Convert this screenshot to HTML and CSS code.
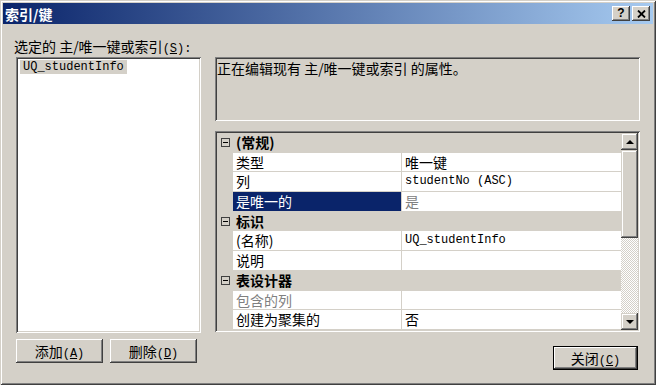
FILE: index.html
```html
<!DOCTYPE html>
<html lang="zh-CN">
<head>
<meta charset="UTF-8">
<link rel="stylesheet" href="styles.css">
</head>
<body>
<div class="window">
  <div class="titlebar">
    <span class="title">索引/键</span>
    <div class="title-buttons">
      <span class="cap-btn help">?</span>
      <span class="cap-btn">
        <svg width="9" height="8" viewBox="0 0 9 8"><path d="M1 0.5 L8 7.5 M8 0.5 L1 7.5" stroke="#000" stroke-width="1.8"/></svg>
      </span>
    </div>
  </div>

  <div class="content">
    <!-- linke Spalte: Liste -->
    <div class="left">
      <div class="label">选定的 主/唯一键或索引<span class="mono">(<u>S</u>):</span></div>
      <div class="listbox">
        <div class="list-item mono">UQ_studentInfo</div>
      </div>
      <div class="left-buttons">
        <button class="btn">添加<span class="mono">(<u>A</u>)</span></button>
        <button class="btn">删除<span class="mono">(<u>D</u>)</span></button>
      </div>
    </div>

    <!-- rechte Spalte: Eigenschaften -->
    <div class="right">
      <div class="desc">正在编辑现有 主/唯一键或索引 的属性。</div>
      <div class="grid">
        <div class="rows">
          <div class="cat"><span class="gutter"><span class="toggle"></span></span><span class="cat-name">(常规)</span></div>
          <div class="prop"><span class="gutter"></span><span class="name">类型</span><span class="value">唯一键</span></div>
          <div class="prop"><span class="gutter"></span><span class="name">列</span><span class="value mono">studentNo (ASC)</span></div>
          <div class="prop"><span class="gutter"></span><span class="name selected">是唯一的</span><span class="value disabled">是</span></div>
          <div class="cat"><span class="gutter"><span class="toggle"></span></span><span class="cat-name">标识</span></div>
          <div class="prop"><span class="gutter"></span><span class="name">(名称)</span><span class="value mono">UQ_studentInfo</span></div>
          <div class="prop"><span class="gutter"></span><span class="name">说明</span><span class="value"></span></div>
          <div class="cat"><span class="gutter"><span class="toggle"></span></span><span class="cat-name">表设计器</span></div>
          <div class="prop"><span class="gutter"></span><span class="name disabled">包含的列</span><span class="value"></span></div>
          <div class="prop"><span class="gutter"></span><span class="name">创建为聚集的</span><span class="value">否</span></div>
        </div>
        <div class="scrollbar">
          <div class="sb-btn"><span class="arrow-up"></span></div>
          <div class="sb-thumb"></div>
          <div class="sb-track"></div>
          <div class="sb-btn"><span class="arrow-down"></span></div>
        </div>
      </div>
      <div class="right-footer">
        <button class="btn default">关闭<span class="mono">(<u>C</u>)</span></button>
      </div>
    </div>
  </div>
</div>
</body>
</html>
```

FILE: styles.css
```css
* {
  box-sizing: border-box;
}

body {
  margin: 0;
  font-family: "Noto Sans CJK SC", sans-serif;
  font-size: 14px;
  color: #000;
  background-color: #d4d0c8;
}

.mono {
  font-family: "Liberation Mono", "Noto Sans CJK SC", monospace;
  font-size: 12px;
}

.window {
  width: 656px;
  height: 385px;
  padding: 3px;
  display: flex;
  flex-direction: column;
  background-color: #d4d0c8;
  box-shadow: inset 1px 1px #d4d0c8, inset -1px -1px #404040, inset 2px 2px #fff, inset -2px -2px #808080;
}

.titlebar {
  height: 21px;
  display: flex;
  align-items: center;
  justify-content: space-between;
  padding: 0 3px 0 2px;
  background: linear-gradient(to right, #0a246a, #a6caf0);
}

.title {
  color: #fff;
  font-weight: bold;
  font-size: 14px;
  line-height: 20px;
}

.title-buttons {
  display: flex;
  gap: 2px;
}

.cap-btn {
  width: 18px;
  height: 15px;
  display: flex;
  align-items: center;
  justify-content: center;
  background-color: #d4d0c8;
  box-shadow: inset -1px -1px #404040, inset 1px 1px #fff, inset -2px -2px #808080, inset 2px 2px #d4d0c8;
}

.cap-btn.help {
  font-family: "Liberation Sans", sans-serif;
  font-weight: bold;
  font-size: 12px;
  line-height: 15px;
}

.content {
  flex: 1;
  display: flex;
  gap: 14px;
  padding: 12px 13px 0 13px;
}

.left {
  width: 185px;
  display: flex;
  flex-direction: column;
}

.label {
  height: 21px;
  line-height: 20px;
  margin-left: -2px;
  white-space: nowrap;
}

.listbox {
  height: 276px;
  padding: 3px 4px;
  background-color: #fff;
  box-shadow: inset 1px 1px #808080, inset -1px -1px #fff, inset 2px 2px #404040, inset -2px -2px #d4d0c8;
}

.list-item {
  width: fit-content;
  height: 14px;
  line-height: 14px;
  padding: 0 3px;
  background-color: #d4d0c8;
}

.left-buttons {
  display: flex;
  gap: 7px;
  margin-top: 6px;
}

.btn {
  height: 24px;
  width: 87px;
  padding: 0;
  border: none;
  font-family: inherit;
  font-size: 14px;
  color: #000;
  background-color: #d4d0c8;
  box-shadow: inset -1px -1px #404040, inset 1px 1px #fff, inset -2px -2px #808080, inset 2px 2px #d4d0c8;
}

.btn.default {
  width: 85px;
  border: 1px solid #000;
}

.right {
  width: 425px;
  display: flex;
  flex-direction: column;
  padding-top: 21px;
}

.desc {
  height: 64px;
  padding: 1px 2px;
  line-height: 20px;
  background-color: #d4d0c8;
  box-shadow: inset 1px 1px #808080, inset -1px -1px #fff, inset 2px 2px #404040, inset -2px -2px #d4d0c8;
}

.grid {
  height: 201px;
  margin-top: 10px;
  padding: 2px;
  display: flex;
  background-color: #d4d0c8;
  box-shadow: inset 1px 1px #808080, inset -1px -1px #fff, inset 2px 2px #404040, inset -2px -2px #d4d0c8;
}

.rows {
  flex: 1;
  overflow: hidden;
}

.cat,
.prop {
  height: 19.7px;
  display: flex;
  line-height: 18px;
}

.gutter {
  width: 16px;
  flex-shrink: 0;
  display: flex;
  align-items: center;
  justify-content: center;
  background-color: #d4d0c8;
}

.toggle {
  position: relative;
  width: 9px;
  height: 9px;
  border: 1px solid #404040;
}

.toggle::after {
  content: "";
  position: absolute;
  left: 1px;
  top: 3px;
  width: 5px;
  height: 1px;
  background-color: #000;
}

.cat-name {
  font-weight: bold;
  padding-left: 3px;
}

.name,
.value {
  background-color: #fff;
  border-bottom: 1px solid #d4d0c8;
  padding-left: 3px;
  white-space: nowrap;
}

.name {
  width: 169px;
  border-right: 1px solid #d4d0c8;
}

.value {
  flex: 1;
}

.value.mono {
  line-height: 18px;
}

.name.selected {
  background-color: #0a246a;
  color: #fff;
}

.disabled {
  color: #808080;
}

.scrollbar {
  width: 17px;
  display: flex;
  flex-direction: column;
}

.sb-btn,
.sb-thumb {
  background-color: #d4d0c8;
  box-shadow: inset -1px -1px #404040, inset 1px 1px #d4d0c8, inset -2px -2px #808080, inset 2px 2px #fff;
}

.sb-btn {
  height: 17px;
  display: flex;
  align-items: center;
  justify-content: center;
}

.sb-thumb {
  height: 88px;
}

.sb-track {
  flex: 1;
  background: repeating-conic-gradient(#d4d0c8 0 25%, #fff 0 50%) 0 0 / 2px 2px;
}

.arrow-up {
  width: 0;
  height: 0;
  border-left: 4px solid transparent;
  border-right: 4px solid transparent;
  border-bottom: 4px solid #000;
}

.arrow-down {
  width: 0;
  height: 0;
  border-left: 4px solid transparent;
  border-right: 4px solid transparent;
  border-top: 4px solid #000;
}

.right-footer {
  display: flex;
  justify-content: flex-end;
  margin-top: 14px;
  padding-right: 2px;
}
```
